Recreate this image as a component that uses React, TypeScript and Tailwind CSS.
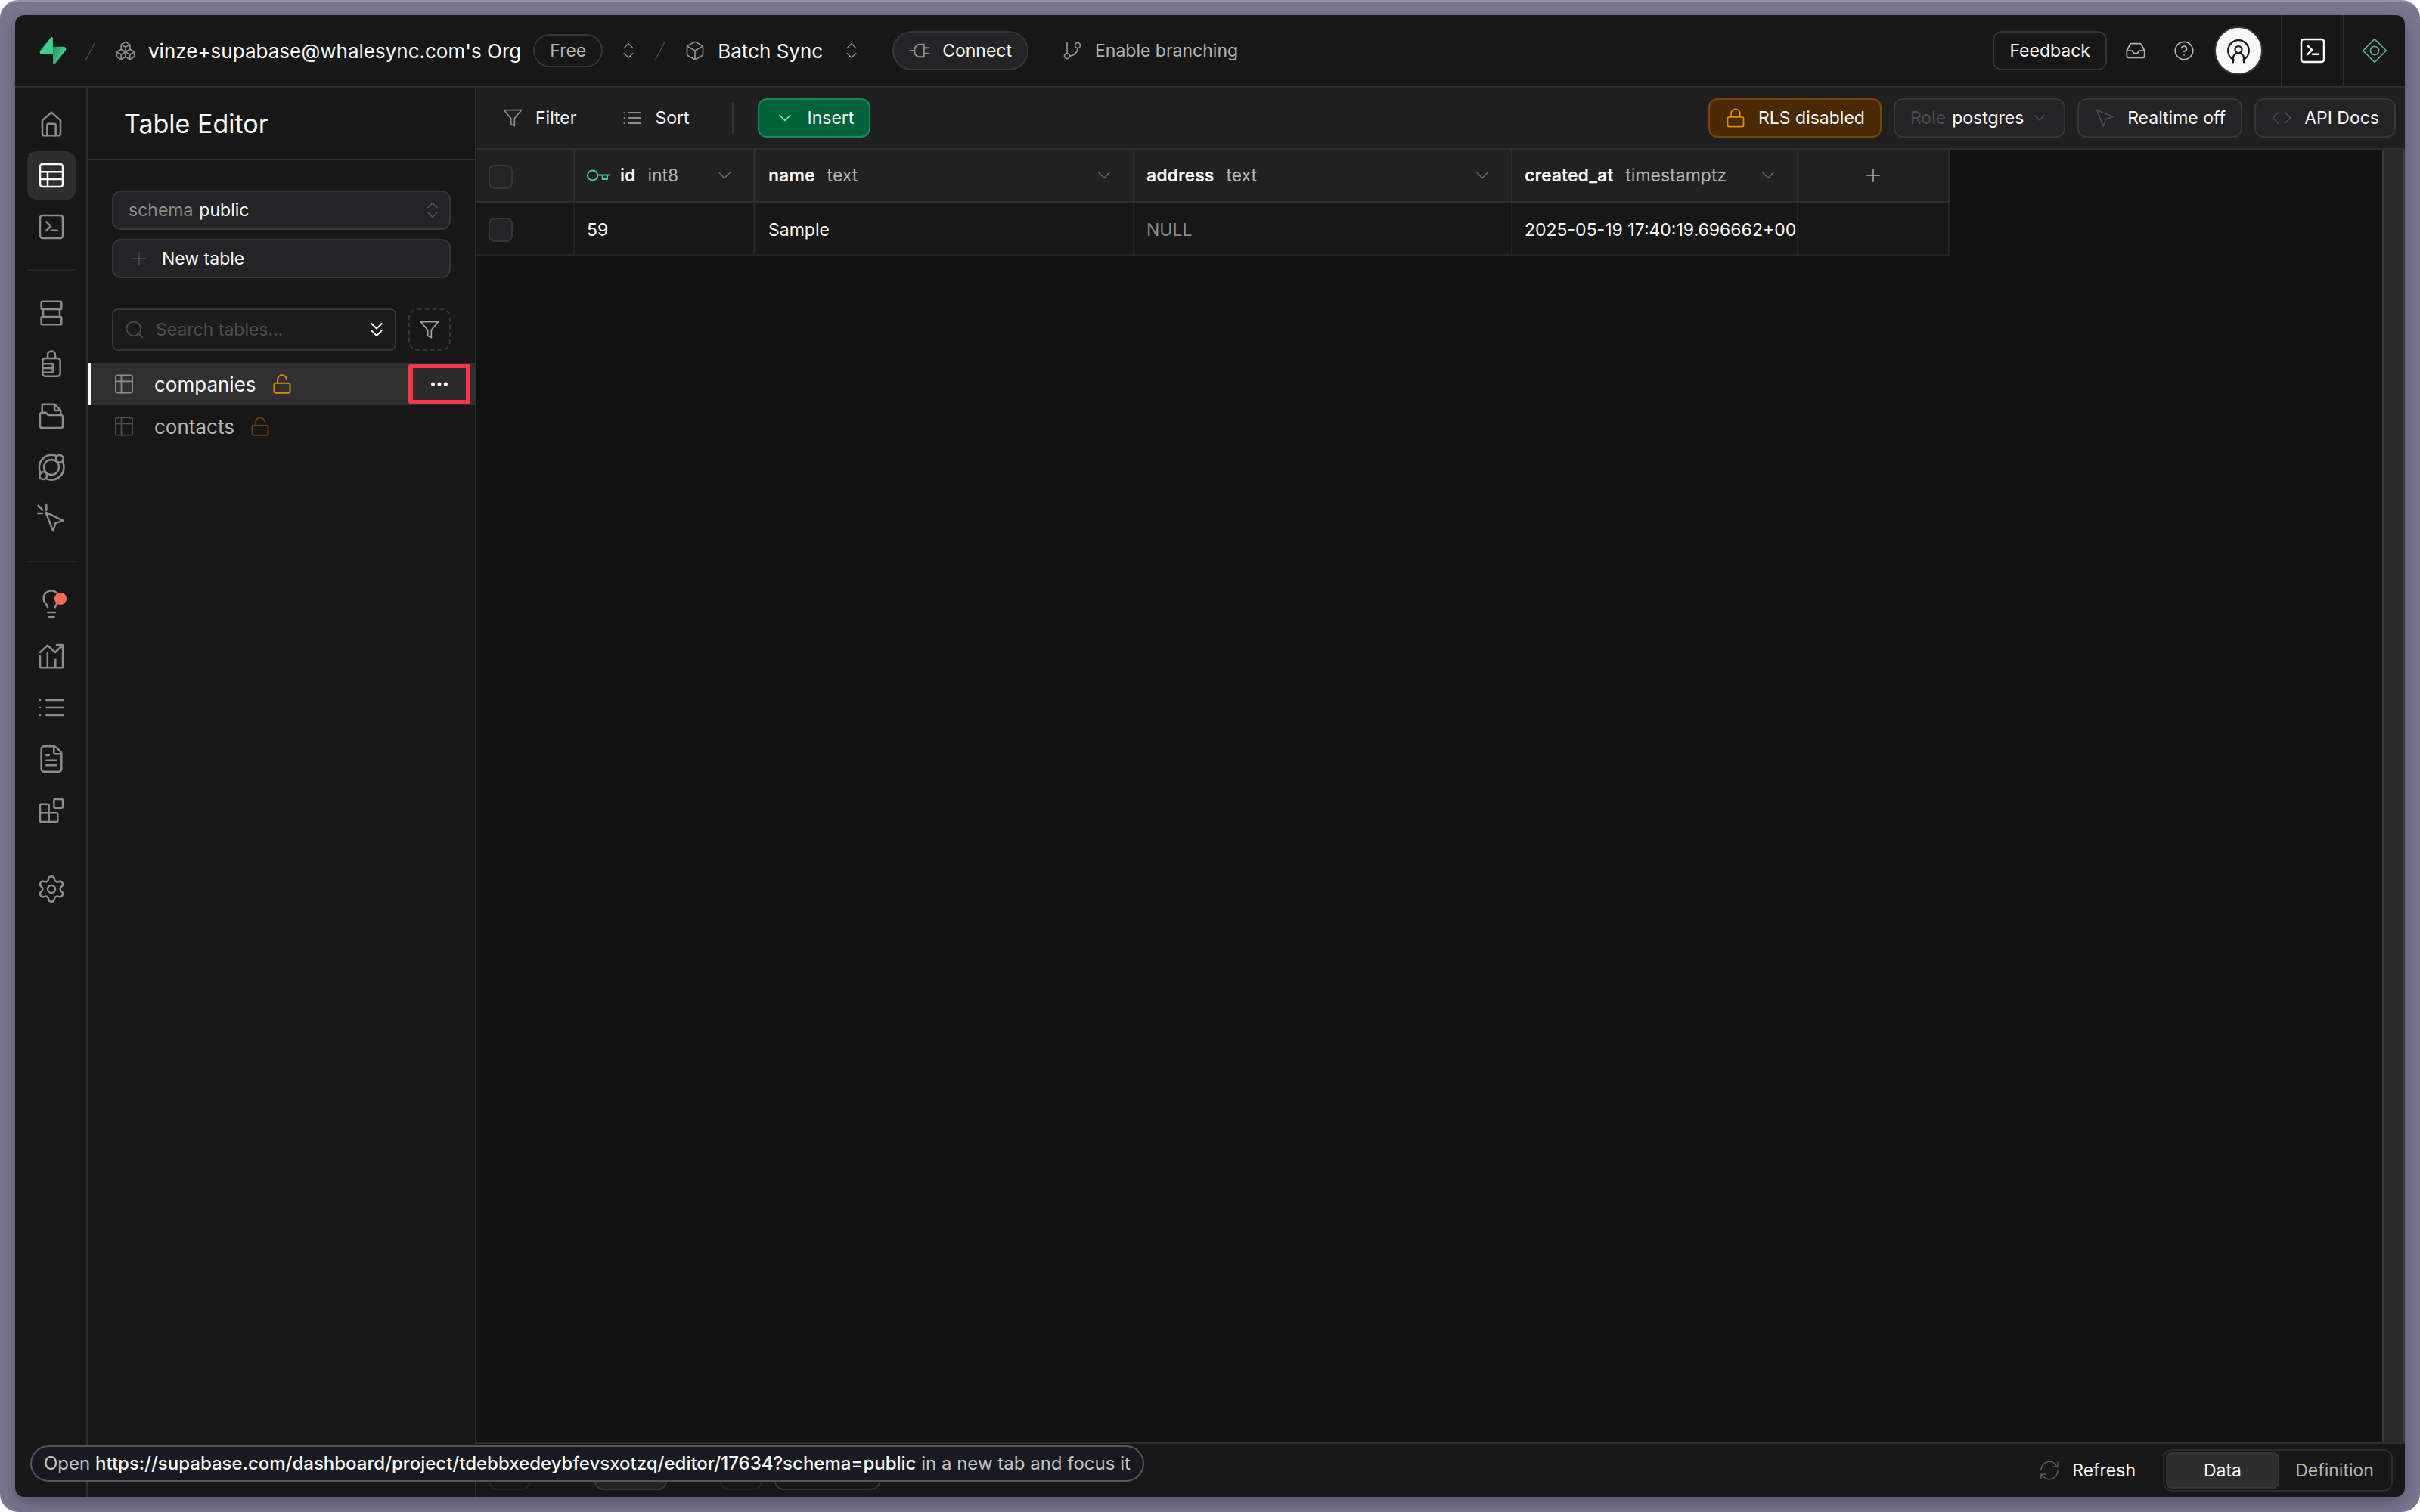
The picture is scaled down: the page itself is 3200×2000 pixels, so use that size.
import {
  Box,
  Boxes,
  ChevronDown,
  ChevronsDown,
  ChevronsUpDown,
  CircleHelp,
  Code,
  FileText,
  GitBranch,
  Inbox,
  Lock,
  LockOpen,
  Plus,
  Search,
  Settings,
} from "lucide-react";
import { ReactNode } from "react";
import clsx from "clsx";

interface IconProps {
  size?: number;
  stroke?: number;
  className?: string;
  children?: ReactNode;
}

const Svg = ({ size = 40, stroke = 1.5, className, children }: IconProps) => (
  <svg
    width={size}
    height={size}
    viewBox="0 0 24 24"
    fill="none"
    stroke="currentColor"
    strokeWidth={stroke}
    strokeLinecap="round"
    strokeLinejoin="round"
    className={clsx("shrink-0", className)}
    aria-hidden="true"
  >
    {children}
  </svg>
);

const Logo = () => (
  <svg width={36} height={36} viewBox="0 0 109 113" fill="none" aria-hidden="true">
    <defs>
      <linearGradient
        id="bolt"
        x1="53.97"
        y1="54.97"
        x2="94.16"
        y2="71.83"
        gradientUnits="userSpaceOnUse"
      >
        <stop stopColor="#249361" />
        <stop offset="1" stopColor="#3ECF8E" />
      </linearGradient>
    </defs>
    <path
      d="M63.7076 110.284C60.8481 113.885 55.0502 111.912 54.9813 107.314L53.9738 40.0627L99.1935 40.0627C107.384 40.0627 111.952 49.5228 106.859 55.9374L63.7076 110.284Z"
      fill="url(#bolt)"
    />
    <path
      d="M45.317 2.07103C48.1765 -1.53037 53.9745 0.442937 54.0434 5.041L54.4849 72.2922H9.83113C1.64038 72.2922 -2.92775 62.8321 2.1655 56.4175L45.317 2.07103Z"
      fill="#3ECF8E"
    />
  </svg>
);

const Slash = () => (
  <Svg size={32} stroke={1} className="text-[#4d4d4d]">
    <path d="M16.5 3.2 7.4 20.8" />
  </Svg>
);

const Funnel = ({ className }: IconProps) => (
  <Svg size={28} className={className}>
    <path d="M22 3H2l8 9.5V19l4 2v-8.5z" />
  </Svg>
);

const Rows = ({ size, stroke }: IconProps) => (
  <Svg size={size} stroke={stroke}>
    <path d="M8 6h13.5M8 12h13.5M8 18h13.5M3 6h.01M3 12h.01M3 18h.01" />
  </Svg>
);

const Grid = ({ className }: IconProps) => (
  <Svg size={28} className={className}>
    <rect x="2.5" y="2" width="19" height="20" rx="2" />
    <path d="M2.5 8.8h19M9 2v20" />
  </Svg>
);

const Terminal = () => (
  <Svg>
    <rect x="3" y="3" width="18" height="18" rx="2" />
    <path d="m8 8 3.5 3.5L8 15M12 14.8h4.6" />
  </Svg>
);

const Plug = () => (
  <Svg size={28} stroke={1.75} className="text-[#8c8c8c]">
    <path d="M1.2 12H6M17 5v14h-5a5.6 5.6 0 0 1-5.6-5.6v-2.8A5.6 5.6 0 0 1 12 5zM17 8.8h5.8M17 15.2h5.8" />
  </Svg>
);

const KeyIcon = () => (
  <svg
    width={32}
    height={16}
    viewBox="0 0 32 16"
    fill="none"
    stroke="currentColor"
    strokeWidth={2}
    strokeLinejoin="round"
    className="text-[#3ecf8e]"
    aria-hidden="true"
  >
    <circle cx="7.600" cy="8" r="6.600" />
    <path d="M14.200 7.600H30.600M20.800 7.600v5.400h6.200V7.600" />
  </svg>
);

const Pointer = () => (
  <Svg size={28} className="text-[#4d4d4d]">
    <path d="m3 3 7.500 18.500 2.800-8 8-2.800z" />
  </Svg>
);

const Refresh = () => (
  <Svg size={28} stroke={1.3} className="text-[#5a5a5a]">
    <path d="M2.500 11.500a9.500 9.500 0 0 1 18.200-3.800M21.500 2.500v5.300h-5.300M21.500 12.500a9.500 9.500 0 0 1-18.200 3.800M2.500 21.500v-5.300h5.300" />
  </Svg>
);

const railGroups: { label: string; icon: ReactNode; active?: boolean; dot?: boolean }[][] = [
  [
    {
      label: "Home",
      icon: (
        <Svg>
          <path d="M4.800 9.200 12 2.800l7.200 6.400v10.400a1.600 1.600 0 0 1-1.600 1.600H6.400a1.600 1.600 0 0 1-1.600-1.600z" />
          <path d="M8.600 21.200V13a1.200 1.200 0 0 1 1.200-1.200h4.400a1.200 1.200 0 0 1 1.200 1.200v8.200" />
        </Svg>
      ),
    },
    {
      label: "Table Editor",
      active: true,
      icon: (
        <Svg>
          <rect x="3" y="3" width="18" height="18" rx="2" />
          <path d="M3 9.200h18M3 15h18M9 9.200V21" />
        </Svg>
      ),
    },
    { label: "SQL Editor", icon: <Terminal /> },
  ],
  [
    {
      label: "Database",
      icon: (
        <Svg>
          <rect x="4" y="2.800" width="16" height="6.200" rx="0.800" />
          <path d="M5.400 9v6M18.600 9v6" />
          <rect x="4" y="15" width="16" height="6.200" rx="0.800" />
        </Svg>
      ),
    },
    {
      label: "Authentication",
      icon: (
        <Svg>
          <path d="M9 7V4.500a3 3 0 0 1 6 0V7" />
          <rect x="5" y="7.200" width="14" height="14.200" rx="2" />
          <path d="M5 11.500h8v7H5M5 15h8" />
        </Svg>
      ),
    },
    {
      label: "Storage",
      icon: (
        <Svg>
          <path d="M3 10.800a1.400 1.400 0 0 1 1.400-1.400h3.100l2 2h10.100a1.400 1.400 0 0 1 1.400 1.400v7.400a1.400 1.400 0 0 1-1.400 1.400H4.400A1.400 1.400 0 0 1 3 20.200z" />
          <path d="M4.600 9.400V3.900a1 1 0 0 1 1-1h9l4.800 4.800v3.700M14.400 3v3.800a1 1 0 0 0 1 1h4" />
        </Svg>
      ),
    },
    {
      label: "Edge Functions",
      icon: (
        <Svg>
          <circle cx="12" cy="12" r="6" />
          <circle cx="18.500" cy="5.300" r="2.900" />
          <circle cx="5.500" cy="18.700" r="2.900" />
          <path d="M15.800 3A9.900 9.900 0 0 0 3.500 17M20.700 7.300A9.900 9.900 0 0 1 8.200 21.200" />
        </Svg>
      ),
    },
    {
      label: "Realtime",
      icon: (
        <Svg>
          <path d="m7.500 7 14 6.700-6.200 1.800-2 6.300zM1.600 1.600 5 5.200M8 1.200v4M1.300 7.800h3.500" />
        </Svg>
      ),
    },
  ],
  [
    {
      label: "Advisors",
      dot: true,
      icon: (
        <Svg>
          <path d="M9 14c0-1.400-.700-1.900-1.600-2.900a6.200 6.200 0 1 1 9.200 0C15.700 12.100 15 12.600 15 14M9 18h6M9.800 21.800h4.400" />
        </Svg>
      ),
    },
    {
      label: "Reports",
      icon: (
        <Svg>
          <path d="m3 9 5.900-5.600L15 9l6-6M16.200 3H21v4.800" />
          <path d="M3 12v8.200a1 1 0 0 0 1 1h16a1 1 0 0 0 1-1V9.500M8.900 9.600v11.500M15.200 14.800v6.300" />
        </Svg>
      ),
    },
    { label: "Logs", icon: <Rows /> },
    { label: "API Docs", icon: <FileText size={40} strokeWidth={1.5} /> },
    {
      label: "Integrations",
      icon: (
        <Svg>
          <rect x="14" y="3" width="7" height="7" rx="1" />
          <path d="M10 21V8a1 1 0 0 0-1-1H4a1 1 0 0 0-1 1v12a1 1 0 0 0 1 1h12a1 1 0 0 0 1-1v-5a1 1 0 0 0-1-1H3" />
        </Svg>
      ),
    },
  ],
];

const RailDivider = () => <hr className="my-6 w-16 border-0 border-t-2 border-[#242424]" />;

const Rail = () => (
  <nav className="flex w-24 shrink-0 flex-col items-center border-r-2 border-[#2e2e2e] pl-0.5 pt-4 text-[#8c8c8c]">
    {railGroups.map((group, i) => (
      <div key={i} className="flex flex-col items-center">
        {i > 0 && <RailDivider />}
        <div className="flex flex-col gap-1">
          {group.map((item) => (
            <button
              key={item.label}
              aria-label={item.label}
              className={clsx(
                "relative flex size-16 items-center justify-center rounded-xl",
                item.active && "bg-[#2e2e2e] text-[#fafafa]"
              )}
            >
              {item.icon}
              {item.dot && (
                <span className="absolute right-3 top-4 size-4 rounded-full bg-[#f56a50]" />
              )}
            </button>
          ))}
        </div>
      </div>
    ))}
    <button aria-label="Project Settings" className="mt-10 flex size-16 items-center justify-center">
      <Settings size={40} strokeWidth={1.5} />
    </button>
  </nav>
);

const Header = () => (
  <header className="flex h-24 shrink-0 items-stretch border-b-2 border-[#2e2e2e] pl-8">
    <div className="flex grow items-center text-[26px] text-[#fafafa]">
      <a href="#home" aria-label="Supabase">
        <Logo />
      </a>
      <div className="ml-4 flex items-center gap-4">
        <Slash />
        <a href="#org" className="flex items-center gap-4">
          <Boxes size={28} strokeWidth={1.5} className="text-[#8c8c8c]" />
          vinze+supabase@whalesync.com's Org
          <span className="flex h-11 items-center rounded-full border-2 border-[#363636] px-5 text-[23px] text-[#b4b4b4]">
            Free
          </span>
        </a>
      </div>
      <button aria-label="Switch organization" className="ml-5">
        <ChevronsUpDown size={28} strokeWidth={1.25} className="text-[#8c8c8c]" />
      </button>
      <div className="ml-3 flex items-center gap-4">
        <Slash />
        <a href="#project" className="flex items-center gap-4">
          <Box size={28} strokeWidth={1.5} className="text-[#8c8c8c]" />
          Batch Sync
        </a>
      </div>
      <button aria-label="Switch project" className="ml-6">
        <ChevronsUpDown size={28} strokeWidth={1.25} className="text-[#8c8c8c]" />
      </button>
      <button className="ml-10 flex h-[52px] items-center gap-4 rounded-full border-2 border-[#363636] bg-[#242326] px-5 text-[23px]">
        <Plug />
        Connect
      </button>
      <button className="ml-11 flex items-center gap-4 text-[23px] text-[#b4b4b4]">
        <GitBranch size={28} strokeWidth={1.5} className="text-[#8c8c8c]" />
        Enable branching
      </button>
    </div>
    <div className="flex items-center pr-6 text-[#b4b4b4]">
      <button className="flex h-[52px] items-center rounded-xl border-2 border-[#363636] px-5 text-[23px] text-[#fafafa]">
        Feedback
      </button>
      <button aria-label="Notifications" className="ml-6">
        <Inbox size={28} strokeWidth={1.5} />
      </button>
      <button aria-label="Help" className="ml-9">
        <CircleHelp size={28} strokeWidth={1.5} />
      </button>
      <button
        aria-label="Account"
        className="ml-[26px] flex size-16 items-center justify-center rounded-full border-2 border-[#363636] bg-[#fafafa] text-[#171717]"
      >
        <Svg size={36}>
          <path d="M7.800 20.200a9.200 9.200 0 1 1 8.400 0" />
          <circle cx="12" cy="11" r="3" />
          <path d="M7.300 22.300v-3.600a4.700 4.700 0 0 1 9.400 0v3.600" />
        </Svg>
      </button>
    </div>
    <button
      aria-label="Inline SQL editor"
      className="flex w-[82px] items-center justify-center border-l-2 border-[#2e2e2e] text-[#fafafa]"
    >
      <Terminal />
    </button>
    <button
      aria-label="AI assistant"
      className="flex w-[82px] items-center justify-center border-l-2 border-[#2e2e2e] text-[#5fa88a]"
    >
      <Svg size={32} stroke={1.3}>
        <path d="m12 .500 11.500 11.500L12 23.500.500 12z" />
        <circle cx="12" cy="12" r="4.200" />
      </Svg>
    </button>
  </header>
);

const tables = [
  { name: "companies", active: true },
  { name: "contacts", active: false },
];

const SidePanel = () => (
  <aside className="flex w-[514px] shrink-0 flex-col border-r-2 border-[#2e2e2e] text-[23px] text-[#fafafa]">
    <h1 className="flex h-24 items-center border-b-2 border-[#2e2e2e] px-12 text-[34px]">
      Table Editor
    </h1>
    <div className="flex flex-col gap-3 px-8 pt-10">
      <label className="flex h-[52px] items-center gap-2 rounded-xl border-2 border-[#363636] bg-[#242326] pl-5 pr-2 text-[#8c8c8c]">
        schema
        <select className="grow appearance-none bg-transparent text-[#fafafa]">
          <option>public</option>
        </select>
        <ChevronsUpDown size={28} strokeWidth={1.25} className="text-[#5a5a5a]" />
      </label>
      <button className="flex h-[52px] items-center gap-4 rounded-xl border-2 border-[#363636] bg-[#242326] px-5">
        <Plus size={28} strokeWidth={1.25} className="text-[#4d4d4d]" />
        New table
      </button>
    </div>
    <div className="flex gap-4 px-8 pb-4 pt-10">
      <div className="flex h-14 grow items-center gap-3.5 rounded-lg border-2 border-[#363636] bg-[#1c1c1c] pl-3.5 pr-2">
        <Search size={28} strokeWidth={1.5} className="text-[#4d4d4d]" />
        <input
          aria-label="Search tables"
          placeholder="Search tables..."
          className="w-0 grow bg-transparent placeholder:text-[#4d4d4d]"
        />
        <button aria-label="Sort tables">
          <ChevronsDown size={32} strokeWidth={1.5} />
        </button>
      </div>
      <button
        aria-label="Filter tables"
        className="flex size-14 items-center justify-center rounded-xl border-2 border-dashed border-[#363636]"
      >
        <Funnel className="text-[#a0a0a0]" />
      </button>
    </div>
    <ul className="text-[26px]">
      {tables.map((table) => (
        <li
          key={table.name}
          className={clsx(
            "flex h-14 items-center border-l-4 pr-1.5",
            table.active ? "border-[#fafafa] bg-[#303030]" : "border-transparent"
          )}
        >
          <a href={`#${table.name}`} className="flex grow items-center pl-[30px]">
            <Grid className={table.active ? "text-[#8c8c8c]" : "text-[#4d4d4d]"} />
            <span className={clsx("mx-[26px]", table.active ? "text-[#fafafa]" : "text-[#b4b4b4]")}>
              {table.name}
            </span>
            <LockOpen
              size={28}
              strokeWidth={1.75}
              className={clsx("-ml-1.5", table.active ? "text-[#db8e00]" : "text-[#693f05]")}
            />
          </a>
          {table.active && (
            <button
              aria-label="Table options"
              className="flex h-[54px] w-[82px] items-center justify-center rounded-sm border-6 border-[#fa3545] bg-[#2a2a2a]"
            >
              <Svg size={28}>
                <g fill="currentColor" stroke="none">
                  <circle cx="4.800" cy="12" r="2.200" />
                  <circle cx="12" cy="12" r="2.200" />
                  <circle cx="19.200" cy="12" r="2.200" />
                </g>
              </Svg>
            </button>
          )}
        </li>
      ))}
    </ul>
  </aside>
);

const Toolbar = () => (
  <div className="flex h-[82px] shrink-0 items-center border-b-2 border-[#2e2e2e] bg-[#1f1f1f] pl-[34px] pr-3 text-[23px] text-[#fafafa]">
    <button className="flex items-center gap-4">
      <Funnel className="text-[#8c8c8c]" />
      Filter
    </button>
    <button className="ml-15 flex items-center gap-4">
      <span className="text-[#8c8c8c]">
        <Rows size={28} stroke={1.75} />
      </span>
      Sort
    </button>
    <div className="ml-14 mr-8 h-10 w-0.5 bg-[#363636]" />
    <button className="flex h-[52px] items-center gap-4 rounded-xl border-2 border-[#138a58] bg-[#006239] px-5">
      <ChevronDown size={28} strokeWidth={1.5} className="text-[#85e0ba]" />
      Insert
    </button>
    <div className="ml-auto flex gap-4">
      <button className="flex h-[52px] items-center gap-4 rounded-xl border-2 border-[#7a4600] bg-[#4a2900] px-5">
        <Lock size={28} strokeWidth={1.5} className="text-[#db8e00]" />
        RLS disabled
      </button>
      <label className="flex h-[52px] items-center gap-2 rounded-xl border-2 border-[#363636] bg-[#242326] px-5 text-[#4d4d4d]">
        Role
        <select className="appearance-none bg-transparent text-[#fafafa]">
          <option>postgres</option>
        </select>
        <ChevronDown size={24} strokeWidth={1.5} />
      </label>
      <button className="flex h-[52px] items-center gap-4 rounded-xl border-2 border-[#363636] bg-[#242326] px-5">
        <Pointer />
        Realtime off
      </button>
      <button className="flex h-[52px] items-center gap-4 rounded-xl border-2 border-[#363636] bg-[#242326] px-5">
        <Code size={28} strokeWidth={1.5} className="text-[#4d4d4d]" />
        API Docs
      </button>
    </div>
  </div>
);

const columns = [
  { name: "id", type: "int8", value: "59", primary: true },
  { name: "name", type: "text", value: "Sample" },
  { name: "address", type: "text", value: null },
  { name: "created_at", type: "timestamptz", value: "2025-05-19 17:40:19.696662+00" },
];

const Checkbox = ({ label }: { label: string }) => (
  <input
    type="checkbox"
    aria-label={label}
    className="block size-8 appearance-none rounded-lg border-2 border-[#363636] bg-[#242326]"
  />
);

const DataGrid = () => (
  <table className="w-[1948px] table-fixed border-separate border-spacing-0 text-left text-[23px] text-[#fafafa]">
    <colgroup>
      <col className="w-[130px]" />
      <col className="w-[240px]" />
      <col className="w-[500px]" />
      <col className="w-[500px]" />
      <col className="w-[378px]" />
      <col className="w-[200px]" />
    </colgroup>
    <thead className="bg-[#212121]">
      <tr className="h-[70px]">
        <th className="border-b-2 border-r-2 border-[#2e2e2e] p-0 pl-4 pt-1">
          <Checkbox label="Select all" />
        </th>
        {columns.map((col) => (
          <th
            key={col.name}
            className={clsx(
              "border-b-2 border-[#2e2e2e] p-0 pl-4 pr-6",
              col.primary ? "border-r-4" : "border-r-2"
            )}
          >
            <div className="flex items-center">
              {col.primary && (
                <span className="mr-3">
                  <KeyIcon />
                </span>
              )}
              <span className="font-semibold">{col.name}</span>
              <span className="ml-4 font-normal text-[#b4b4b4]">{col.type}</span>
              <button aria-label={`${col.name} options`} className="ml-auto">
                <ChevronDown size={28} strokeWidth={1.5} className="text-[#6a6a6a]" />
              </button>
            </div>
          </th>
        ))}
        <th className="border-b-2 border-r-2 border-[#2e2e2e] p-0">
          <button aria-label="Add column" className="flex w-full justify-center">
            <Plus size={28} strokeWidth={1.25} className="text-[#b4b4b4]" />
          </button>
        </th>
      </tr>
    </thead>
    <tbody className="bg-[#171717]">
      <tr className="h-[70px]">
        <td className="border-b-2 border-r-2 border-[#242424] p-0 pl-4 pt-1">
          <Checkbox label="Select row 59" />
        </td>
        {columns.map((col) => (
          <td
            key={col.name}
            className={clsx(
              "overflow-hidden whitespace-nowrap border-b-2 border-[#242424] p-0 pl-4 pt-1",
              col.primary ? "border-r-4" : "border-r-2",
              col.value === null && "text-[#8c8c8c]"
            )}
          >
            {col.value ?? "NULL"}
          </td>
        ))}
        <td className="border-b-2 border-r-2 border-[#242424] p-0" />
      </tr>
    </tbody>
  </table>
);

const Footer = () => (
  <footer className="flex h-[72px] shrink-0 items-center border-t-2 border-[#2e2e2e] px-4 text-[23px] text-[#fafafa]">
    <button aria-label="Previous page" className="h-[52px] w-14 rounded-xl border-2 border-[#242424]" />
    <input
      aria-label="Page"
      className="ml-[84px] h-[52px] w-24 rounded-xl border-2 border-[#363636] bg-[#212121]"
    />
    <button
      aria-label="Next page"
      className="ml-[70px] h-[52px] w-14 rounded-xl border-2 border-[#242424]"
    />
    <button
      aria-label="Rows per page"
      className="ml-4 h-[52px] w-[140px] rounded-xl border-2 border-[#363636]"
    />
    <button className="ml-auto flex items-center gap-4">
      <Refresh />
      Refresh
    </button>
    <div className="ml-9 flex h-14 rounded-xl border-2 border-[#2e2e2e] p-0.5">
      <button className="w-[150px] rounded-lg border-2 border-[#363636] bg-[#2e2e2e]">Data</button>
      <button className="w-[146px] text-[#b4b4b4]">Definition</button>
    </div>
  </footer>
);

const StatusBubble = () => (
  <div className="absolute bottom-5 left-5 flex h-12 items-center rounded-full border-2 border-[#55565c] bg-[#191a21] px-4 text-[24px] text-[#c4c4c6]">
    <p className="whitespace-nowrap">
      Open{" "}
      <span className="font-medium text-[#fafafa]">
        https://supabase.com/dashboard/project/tdebbxedeybfevsxotzq/editor/17634?schema=public
      </span>{" "}
      in a new tab and focus it
    </p>
  </div>
);

export default function App() {
  return (
    <div className="bg-white font-[Inter,sans-serif]">
      <div className="flex h-screen rounded-3xl border-t-2 border-[#9494a8] bg-[#787891] px-5 pb-5 pt-[18px]">
        <div className="relative flex grow flex-col overflow-hidden rounded-xl bg-[#171717] shadow-[0_8px_24px_rgba(0,0,0,0.3)]">
          <Header />
          <div className="flex min-h-0 grow">
            <Rail />
            <SidePanel />
            <main className="flex min-w-0 grow flex-col">
              <Toolbar />
              <div className="flex min-h-0 grow bg-[#121212]">
                <div className="min-w-0 grow overflow-hidden">
                  <DataGrid />
                </div>
                <div className="w-[30px] border-x-2 border-[#3a3a3a] bg-[#2b2b2b]" />
              </div>
              <Footer />
            </main>
          </div>
          <StatusBubble />
        </div>
      </div>
    </div>
  );
}
